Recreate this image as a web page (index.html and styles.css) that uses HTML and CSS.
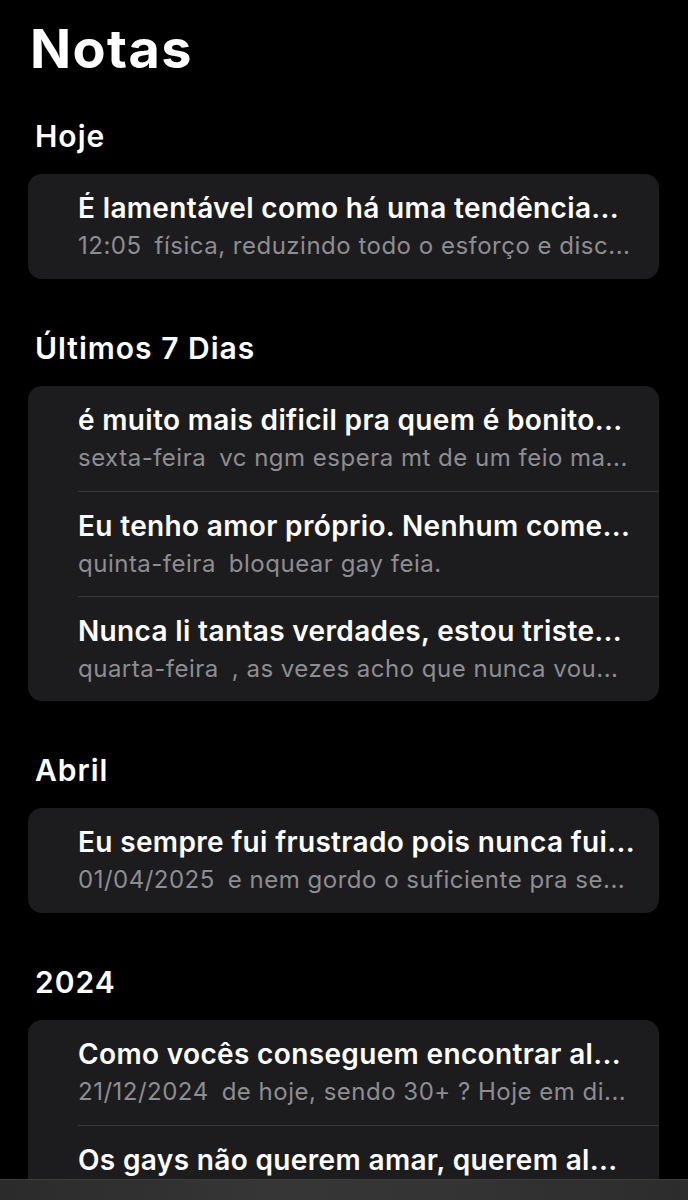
FILE: index.html
```html
<!DOCTYPE html>
<html lang="pt">
<head>
    <meta charset="UTF-8">
    <meta name="viewport" content="width=device-width, initial-scale=1.0">
    <title>Notas</title>
    <link rel="stylesheet" href="styles.css">
</head>
<body>
    <div class="notes-page">
        <h1 class="page-title">Notas</h1>

        <section class="notes-group">
            <h2 class="group-title">Hoje</h2>
            <div class="notes-card">
                <div class="note-row">
                    <p class="note-title">É lamentável como há uma tendência...</p>
                    <p class="note-meta"><span class="note-date">12:05</span>física, reduzindo todo o esforço e disc...</p>
                </div>
            </div>
        </section>

        <section class="notes-group">
            <h2 class="group-title">Últimos 7 Dias</h2>
            <div class="notes-card">
                <div class="note-row">
                    <p class="note-title">é muito mais dificil pra quem é bonito...</p>
                    <p class="note-meta"><span class="note-date">sexta-feira</span>vc ngm espera mt de um feio ma...</p>
                </div>
                <div class="note-row">
                    <p class="note-title">Eu tenho amor próprio. Nenhum come...</p>
                    <p class="note-meta"><span class="note-date">quinta-feira</span>bloquear gay feia.</p>
                </div>
                <div class="note-row">
                    <p class="note-title">Nunca li tantas verdades, estou triste...</p>
                    <p class="note-meta"><span class="note-date">quarta-feira</span>, as vezes acho que nunca vou...</p>
                </div>
            </div>
        </section>

        <section class="notes-group">
            <h2 class="group-title">Abril</h2>
            <div class="notes-card">
                <div class="note-row">
                    <p class="note-title">Eu sempre fui frustrado pois nunca fui...</p>
                    <p class="note-meta"><span class="note-date">01/04/2025</span>e nem gordo o suficiente pra se...</p>
                </div>
            </div>
        </section>

        <section class="notes-group">
            <h2 class="group-title">2024</h2>
            <div class="notes-card">
                <div class="note-row">
                    <p class="note-title">Como vocês conseguem encontrar al...</p>
                    <p class="note-meta"><span class="note-date">21/12/2024</span>de hoje, sendo 30+ ? Hoje em di...</p>
                </div>
                <div class="note-row note-row-partial">
                    <p class="note-title">Os gays não querem amar, querem al...</p>
                </div>
            </div>
        </section>
    </div>

    <div class="bottom-bar"></div>
</body>
</html>
```

FILE: styles.css
```css
/* Base */
body {
    font-family: 'Inter', 'Noto Sans', sans-serif;
    background-color: #000;
    color: #fff;
    margin: 0;
    padding: 0;
    height: 100vh;
    overflow: hidden;
}

.notes-page {
    padding: 0 29px 0 28px;
}

.page-title {
    font-size: 54px;
    font-weight: 700;
    line-height: 1;
    letter-spacing: 1.4px;
    margin: 22px 0 0 2px;
}

/* Sections */
.group-title {
    font-size: 30px;
    font-weight: 600;
    line-height: 1;
    letter-spacing: 1px;
    margin: 0 0 0 7px;
    padding-top: 45px;
    padding-bottom: 23px;
}

.notes-group + .notes-group .group-title {
    padding-top: 54px;
}

/* Cards */
.notes-card {
    background-color: #1c1c1e;
    border-radius: 14px;
    overflow: hidden;
}

.note-row {
    margin-left: 50px;
    height: 105px;
    box-sizing: border-box;
    display: flex;
    flex-direction: column;
    justify-content: center;
    gap: 7px;
    padding-right: 8px;
}

.note-row + .note-row {
    border-top: 1px solid #38383a;
}

.note-row-partial {
    justify-content: flex-start;
    padding-top: 18px;
}

.note-title {
    margin: 0;
    font-size: 28px;
    font-weight: 600;
    line-height: 32px;
    letter-spacing: 0.35px;
    white-space: nowrap;
    overflow: hidden;
}

.note-meta {
    margin: 0;
    font-size: 24px;
    font-weight: 400;
    line-height: 30px;
    letter-spacing: 0.5px;
    color: #8d8d92;
    white-space: nowrap;
    overflow: hidden;
}

.note-date {
    margin-right: 13px;
}

/* Bottom toolbar edge */
.bottom-bar {
    position: fixed;
    left: 0;
    right: 0;
    bottom: 0;
    height: 20px;
    background: linear-gradient(90deg, #2b2b2b, #363636 40%, #333 70%, #2c2c2c);
    border-top: 1px solid #3c3c3c;
}
```
